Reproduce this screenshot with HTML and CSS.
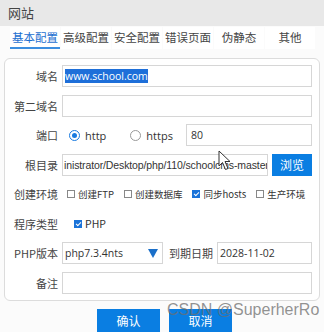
FILE: index.html
```html
<!DOCTYPE html>
<html lang="zh-CN">
<head>
  <meta charset="UTF-8" />
  <title>网站</title>
  <link rel="stylesheet" href="styles.css">
</head>
<body>
  <div class="titlebar">网站</div>

  <nav class="tabs">
    <div class="tab active">基本配置</div>
    <div class="tab">高级配置</div>
    <div class="tab">安全配置</div>
    <div class="tab">错误页面</div>
    <div class="tab">伪静态</div>
    <div class="tab">其他</div>
  </nav>

  <section class="panel">
    <div class="row">
      <label class="label">域名</label>
      <div class="input"><span class="selected">www.school.com</span></div>
    </div>
    <div class="row">
      <label class="label">第二域名</label>
      <div class="input"></div>
    </div>
    <div class="row">
      <label class="label">端口</label>
      <div class="radios">
        <span class="radio checked"></span><span class="radio-text">http</span>
        <span class="radio"></span><span class="radio-text">https</span>
      </div>
      <div class="input port">80</div>
    </div>
    <div class="row">
      <label class="label">根目录</label>
      <div class="input path">inistrator/Desktop/php/110/schoolcms-master</div>
      <button class="btn browse">浏览</button>
    </div>
    <div class="row">
      <label class="label">创建环境</label>
      <div class="checks">
        <span class="check"></span><span class="check-text">创建FTP</span>
        <span class="check"></span><span class="check-text">创建数据库</span>
        <span class="check checked"></span><span class="check-text">同步hosts</span>
        <span class="check"></span><span class="check-text">生产环境</span>
      </div>
    </div>
    <div class="row">
      <label class="label">程序类型</label>
      <div class="checks type">
        <span class="check checked"></span><span class="check-text">PHP</span>
      </div>
    </div>
    <div class="row">
      <label class="label">PHP版本</label>
      <div class="input select">php7.3.4nts<span class="arrow"></span></div>
      <label class="label inline">到期日期</label>
      <div class="input">2028-11-02</div>
    </div>
    <div class="row">
      <label class="label">备注</label>
      <div class="input"></div>
    </div>
  </section>

  <div class="actions">
    <button class="btn">确认</button>
    <button class="btn">取消</button>
  </div>

  <!-- mouse pointer captured in the screenshot -->
  <svg class="cursor" width="14" height="21" viewBox="0 0 14 21">
    <path d="M1 1 L1 16 L4.5 12.5 L7.5 19.5 L10 18.5 L7 11.5 L12 11.5 Z" fill="#fff" stroke="#333" stroke-width="1"/>
  </svg>
  <div class="watermark">CSDN @SuperherRo</div>
</body>
</html>
```

FILE: styles.css
```css
*, *::before, *::after {
  box-sizing: border-box;
}
body {
  margin: 0;
  width: 324px;
  height: 332px;
  background: #fbfbfb;
  font-family: "Noto Sans CJK SC", "Noto Sans", sans-serif;
  color: #333;
  position: relative;
  overflow: hidden;
}

.titlebar {
  height: 26px;
  line-height: 26px;
  padding-left: 8px;
  background: #e8e8e8;
  font-size: 13px;
  color: #444;
}

.tabs {
  display: flex;
  padding: 1px 8px 0 10px;
  height: 26px;
}
.tab {
  width: 52px;
  height: 22px;
  line-height: 20px;
  text-align: center;
  font-size: 11.5px;
  color: #444;
  background: #fff;
  margin-right: 1px;
}
.tab.active {
  color: #1d6fd0;
  border-bottom: 2px solid #3c8ee0;
}

.panel {
  margin: 6px 4px 0;
  padding: 6px 7px 6px 0;
  border: 1px solid #dcdcdc;
  border-radius: 6px;
  background: #fff;
  display: flex;
  flex-direction: column;
  gap: 7.5px;
}

.row {
  display: flex;
  align-items: center;
  height: 22px;
  gap: 4px;
}
.label {
  width: 53px;
  flex: none;
  text-align: right;
  font-size: 11px;
  color: #444;
  white-space: nowrap;
}
.label.inline {
  width: auto;
}

.input {
  flex: 1;
  min-width: 0;
  height: 22px;
  border: 1px solid #d6d6d6;
  background: #fff;
  font-family: "Open Sans", "Noto Sans CJK SC", sans-serif;
  font-size: 10.5px;
  line-height: 20px;
  padding-left: 2px;
  color: #333;
  white-space: nowrap;
  overflow: hidden;
}
.selected {
  background: #1e6fd9;
  color: #fff;
}
.input.port {
  flex: none;
  width: 126px;
  margin-left: auto;
  padding-left: 4px;
}
.input.path {
  font-family: "Liberation Sans", sans-serif;
  font-size: 10.5px;
  letter-spacing: -0.12px;
  padding-left: 1px;
}
.input.select {
  flex: none;
  width: 101px;
  position: relative;
  margin-right: 2px;
}
.arrow {
  position: absolute;
  right: 4px;
  top: 6px;
  border-left: 5px solid transparent;
  border-right: 5px solid transparent;
  border-top: 9px solid #1a6fc9;
}

.radios {
  display: flex;
  align-items: center;
  padding-left: 7px;
  flex: none;
  font-family: "Open Sans", sans-serif;
}
.radio {
  width: 11px;
  height: 11px;
  border: 1px solid #999;
  border-radius: 50%;
  position: relative;
}
.radio.checked {
  border-color: #1a7be0;
}
.radio.checked::after {
  content: "";
  position: absolute;
  left: 2px;
  top: 2px;
  width: 5px;
  height: 5px;
  border-radius: 50%;
  background: #1a7be0;
}
.radio-text {
  font-size: 11px;
  margin: 0 24px 0 5px;
}
.radio-text:last-child {
  margin-right: 0;
}

.checks {
  display: flex;
  align-items: center;
  font-size: 9.5px;
  padding-left: 5px;
  white-space: nowrap;
  flex: none;
}
.check {
  width: 8px;
  height: 8px;
  border: 1px solid #888;
  margin-right: 3px;
  position: relative;
  flex: none;
}
.check.checked {
  background: #1a73d9;
  border-color: #1a73d9;
}
.check.checked::after {
  content: "";
  position: absolute;
  left: 1.5px;
  top: 0;
  width: 3px;
  height: 5px;
  border: solid #fff;
  border-width: 0 1px 1px 0;
  transform: rotate(45deg);
}
.check-text {
  margin-right: 10px;
}
.checks.type {
  padding-left: 12px;
  font-size: 10.5px;
}

.btn {
  height: 22px;
  border: none;
  background: #0a7ee2;
  color: #fff;
  font-family: inherit;
  font-size: 12px;
  padding: 0;
}
.btn.browse {
  width: 40px;
  flex: none;
}

.actions {
  display: flex;
  justify-content: center;
  gap: 9px;
  margin-top: 8px;
  padding-left: 5px;
}
.actions .btn {
  width: 63px;
  height: 24px;
}

.cursor {
  position: absolute;
  left: 218px;
  top: 150px;
}
.watermark {
  position: absolute;
  left: 167px;
  top: 301px;
  font-family: "Liberation Sans", sans-serif;
  font-size: 16px;
  color: rgba(110, 110, 110, 0.75);
}
```
